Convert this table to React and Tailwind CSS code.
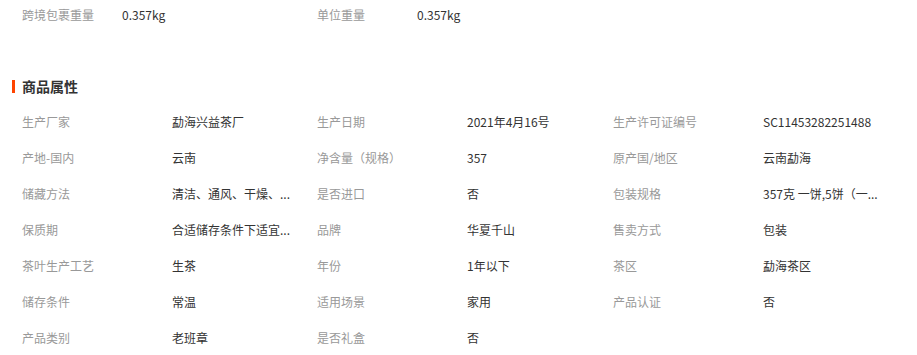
import React from "react";

const FONT = { fontFamily: '"Microsoft YaHei", "Noto Sans CJK SC", "Noto Sans", sans-serif' };

// 长文本按页面原样截断显示
const ATTRS = [
  ["生产厂家", "勐海兴益茶厂"],
  ["生产日期", "2021年4月16号"],
  ["生产许可证编号", "SC11453282251488"],
  ["产地-国内", "云南"],
  ["净含量（规格）", "357"],
  ["原产国/地区", "云南勐海"],
  ["储藏方法", "清洁、通风、干燥、..."],
  ["是否进口", "否"],
  ["包装规格", "357克 一饼,5饼（一..."],
  ["保质期", "合适储存条件下适宜..."],
  ["品牌", "华夏千山"],
  ["售卖方式", "包装"],
  ["茶叶生产工艺", "生茶"],
  ["年份", "1年以下"],
  ["茶区", "勐海茶区"],
  ["储存条件", "常温"],
  ["适用场景", "家用"],
  ["产品认证", "否"],
  ["产品类别", "老班章"],
  ["是否礼盒", "否"],
];

function Cell({ label, value }) {
  return (
    <div className="flex items-center h-full">
      <span className="w-[150px] shrink-0 text-[#999999]">{label}</span>
      <span className="whitespace-nowrap text-[#333333]">{value}</span>
    </div>
  );
}

export default function App() {
  return (
    <div className="bg-white w-[917px] h-[355px] overflow-hidden text-xs" style={FONT}>
      {/* 物流重量 */}
      <div className="grid grid-cols-[295px_296px_296px] h-[30px] pl-[22px]">
        <div className="flex items-center">
          <span className="w-[100px] shrink-0 text-[#999999]">跨境包裹重量</span>
          <span className="text-[#333333]">0.357kg</span>
        </div>
        <div className="flex items-center">
          <span className="w-[100px] shrink-0 text-[#999999]">单位重量</span>
          <span className="text-[#333333]">0.357kg</span>
        </div>
      </div>

      {/* 标题 */}
      <div className="mt-[46px] h-[20px] flex items-center pl-[12px]">
        <span className="w-[3px] h-[13px] bg-[#ff4400] mr-[7px]" />
        <span className="text-[14px] font-bold text-[#333333]">商品属性</span>
      </div>

      {/* 属性表 */}
      <div className="mt-[8px] pl-[22px] grid grid-cols-[295px_296px_296px] auto-rows-[36px]">
        {ATTRS.map(([label, value]) => (
          <Cell key={label} label={label} value={value} />
        ))}
      </div>
    </div>
  );
}
